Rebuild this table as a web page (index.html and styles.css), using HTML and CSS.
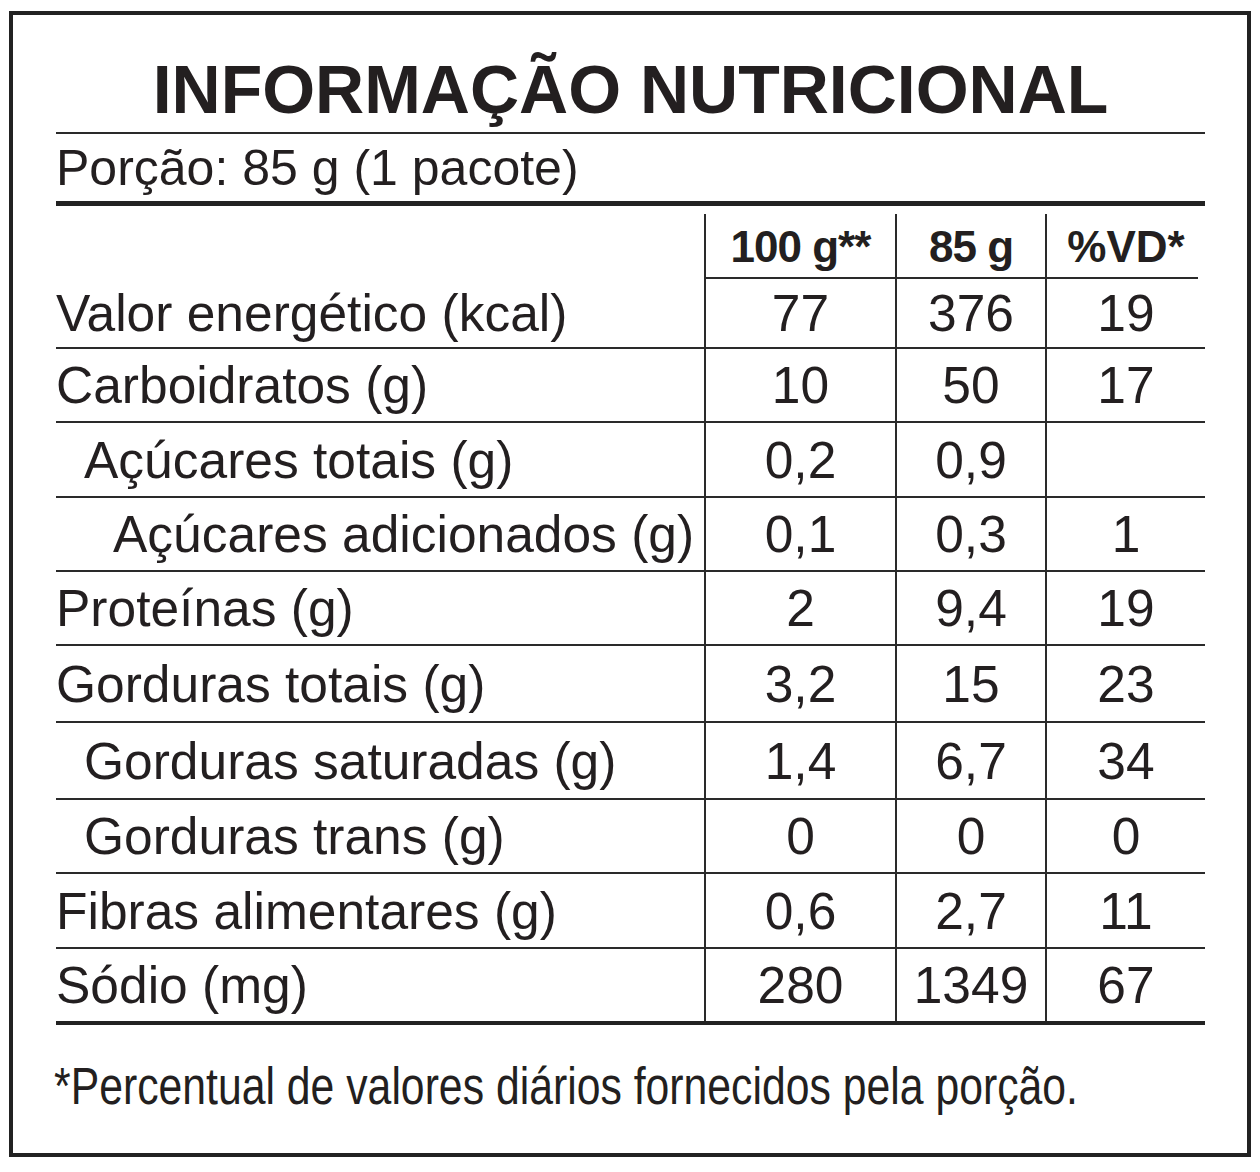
FILE: index.html
```html
<!DOCTYPE html>
<html lang="pt-BR">
<head>
<meta charset="utf-8">
<title>Informação Nutricional</title>
<link rel="stylesheet" href="styles.css">
</head>
<body>
<div class="label">
  <h1 class="title">INFORMAÇÃO NUTRICIONAL</h1>
  <div class="portion">Porção: 85 g (1 pacote)</div>
  <div class="table">
    <div class="cell head-blank"></div>
    <div class="cell head">100 g**</div>
    <div class="cell head">85 g</div>
    <div class="cell head last">%VD*</div>

    <div class="cell name">Valor energético (kcal)</div>
    <div class="cell num">77</div><div class="cell num">376</div><div class="cell num">19</div>

    <div class="cell name">Carboidratos (g)</div>
    <div class="cell num">10</div><div class="cell num">50</div><div class="cell num">17</div>

    <div class="cell name lv1">Açúcares totais (g)</div>
    <div class="cell num">0,2</div><div class="cell num">0,9</div><div class="cell num"></div>

    <div class="cell name lv2">Açúcares adicionados (g)</div>
    <div class="cell num">0,1</div><div class="cell num">0,3</div><div class="cell num">1</div>

    <div class="cell name">Proteínas (g)</div>
    <div class="cell num">2</div><div class="cell num">9,4</div><div class="cell num">19</div>

    <div class="cell name">Gorduras totais (g)</div>
    <div class="cell num">3,2</div><div class="cell num">15</div><div class="cell num">23</div>

    <div class="cell name lv1">Gorduras saturadas (g)</div>
    <div class="cell num">1,4</div><div class="cell num">6,7</div><div class="cell num">34</div>

    <div class="cell name lv1">Gorduras trans (g)</div>
    <div class="cell num">0</div><div class="cell num">0</div><div class="cell num">0</div>

    <div class="cell name">Fibras alimentares (g)</div>
    <div class="cell num">0,6</div><div class="cell num">2,7</div><div class="cell num">11</div>

    <div class="cell name end">Sódio (mg)</div>
    <div class="cell num end">280</div><div class="cell num end">1349</div><div class="cell num end">67</div>
  </div>
  <p class="note">*Percentual de valores diários fornecidos pela porção.</p>
</div>
</body>
</html>
```

FILE: styles.css
```css
* { box-sizing: border-box; }

html, body {
  margin: 0;
  padding: 0;
  background: #ffffff;
}

body {
  padding: 11px 0 0 9px;
  font-family: "Liberation Sans", Arial, sans-serif;
  color: #231f20;
}

.label {
  width: 1242px;
  height: 1146px;
  border: 4px solid #222;
  padding: 41px 42px 0 43px;
}

.title {
  margin: 0;
  font-size: 68px;
  line-height: 67px;
  font-weight: 700;
  text-align: center;
  height: 78px;
  border-bottom: 2px solid #2a2a2a;
}

.portion {
  font-size: 50px;
  line-height: 50px;
  height: 72px;
  padding-top: 9px;
  border-bottom: 5px solid #222;
}

.table {
  display: grid;
  grid-template-columns: 648px 191px 150px 160px;
  grid-template-rows: 73px 70px 74px 75px 74px 74px 77px 77px 74px 75px 72px;
  border-bottom: 4px solid #222;
}

.cell {
  display: flex;
  align-items: center;
  font-size: 51.5px;
  border-bottom: 2px solid #2a2a2a;
  white-space: nowrap;
}

.cell.end { border-bottom: none; }

.head-blank { border-bottom: none; }

.head {
  margin-top: 8px;
  justify-content: center;
  font-size: 44px;
  font-weight: 700;
  letter-spacing: -1px;
  border-left: 2px solid #2a2a2a;
  padding-top: 2px;
}

.head.last {
  margin-right: 7px;
  padding-left: 7px;
  letter-spacing: 0;
}

.num {
  justify-content: center;
  border-left: 2px solid #2a2a2a;
}

.name { padding-left: 0; }
.lv1 { padding-left: 28px; }
.lv2 { padding-left: 57px; }

.note {
  margin: 36px 0 0 -2px;
  font-size: 51px;
  line-height: 52px;
  white-space: nowrap;
  transform: scaleX(0.838);
  transform-origin: left center;
}
```
